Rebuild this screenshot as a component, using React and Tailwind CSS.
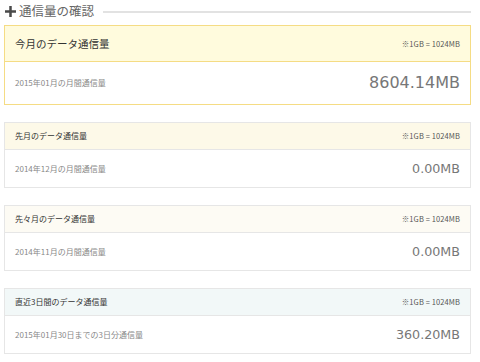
const jp = { fontFamily: '"Noto Sans CJK JP", "Noto Sans", sans-serif' }
const num = { fontFamily: '"DejaVu Sans", "Noto Sans", sans-serif' }

const cards = [
  {
    title: '今月のデータ通信量',
    label: '2015年01月の月間通信量',
    value: '8604.14MB',
    big: true,
    border: 'border-[#f5dc84]',
    head: 'bg-[#fffbdd]',
  },
  {
    title: '先月のデータ通信量',
    label: '2014年12月の月間通信量',
    value: '0.00MB',
    border: 'border-[#e6e6e6]',
    head: 'bg-[#fdf9e8]',
  },
  {
    title: '先々月のデータ通信量',
    label: '2014年11月の月間通信量',
    value: '0.00MB',
    border: 'border-[#e6e6e6]',
    head: 'bg-[#fdfbf4]',
  },
  {
    title: '直近3日間のデータ通信量',
    label: '2015年01月30日までの3日分通信量',
    value: '360.20MB',
    border: 'border-[#e6e6e6]',
    head: 'bg-[#f2f8f8]',
  },
]

function Card({ c }) {
  return (
    <div className={`border ${c.border} bg-white`}>
      <div
        className={`flex items-center justify-between border-b ${c.border} ${c.head} px-[10px] ${c.big ? 'h-[36px]' : 'h-[27px]'}`}
      >
        <span className={`text-[#333] ${c.big ? 'text-[10.5px]' : 'text-[8px]'}`}>{c.title}</span>
        <span className="text-[7.5px] text-[#555] tracking-[0.1px]">※1GB = 1024MB</span>
      </div>
      <div className={`flex items-center justify-between px-[10px] ${c.big ? 'h-[42px]' : 'h-[37px]'}`}>
        <span className="text-[8px] text-[#888]">{c.label}</span>
        <span className={`text-[#777] ${c.big ? 'text-[16px]' : 'text-[12.7px]'}`} style={num}>
          {c.value}
        </span>
      </div>
    </div>
  )
}

export default function App() {
  return (
    <div className="w-[480px] h-[362px] bg-white pl-[4px] pr-[9px] pt-[3px]" style={jp}>
      <div className="flex items-center gap-[9px] h-[17px]">
        <div className="flex items-center">
          <svg width="11" height="11" viewBox="0 0 11 11" className="ml-[1px]">
            <rect x="0" y="4.25" width="11" height="2.5" fill="#4a4a4a" />
            <rect x="4.25" y="0" width="2.5" height="11" fill="#4a4a4a" />
          </svg>
          <span className="text-[12.5px] text-[#666] ml-[3px]">通信量の確認</span>
        </div>
        <div className="flex-1 h-[2px] bg-[#e2e2e2]" />
      </div>
      <div className="flex flex-col gap-[17px] mt-[5px]">
        {cards.map((c) => (
          <Card key={c.title} c={c} />
        ))}
      </div>
    </div>
  )
}
